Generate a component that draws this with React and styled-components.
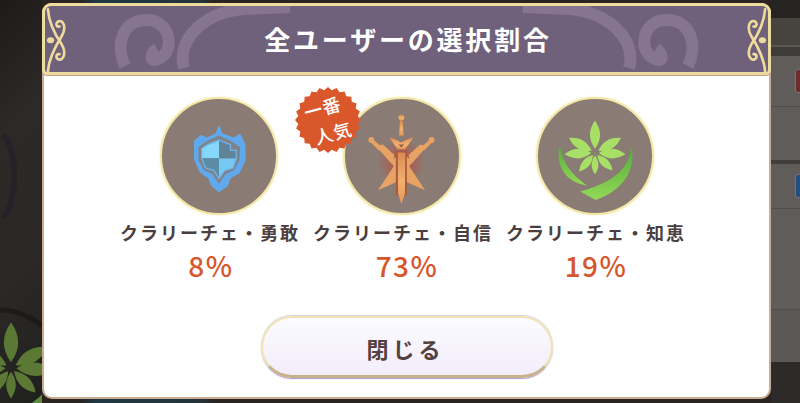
import React from 'react'
import styled, { createGlobalStyle } from 'styled-components'

const GlobalStyle = createGlobalStyle`
    html, body {
        margin: 0;
        padding: 0;
        background: #232120;
    }
    * {
        box-sizing: border-box;
    }
`

const Page = styled.div`
    width: 800px;
    height: 403px;
    overflow: hidden;
    display: grid;
    grid-template-columns: 42px 729px 29px;
    font-family: 'Noto Sans CJK JP', 'Noto Sans', sans-serif;
    background: linear-gradient(90deg, #2b2320 10%, #1e3842 12%, #24333a 25%, #2b2320 27%);
`

const LeftSide = styled.div`
    background: linear-gradient(135deg, #1d1b1a 0%, #2c2a27 30%, #2a2725 70%, #1f211e 100%);
    overflow: hidden;
`

const RightSide = styled.div`
    display: flex;
    flex-direction: column;
    overflow: hidden;
`

const Band = styled.div`
    height: ${p => p.$h}px;
    flex: none;
    background: ${p => p.$bg};
    display: flex;
    justify-content: flex-end;
    align-items: center;
`

const Tag = styled.div`
    width: 8px;
    height: 24px;
    margin-right: -3px;
    border-radius: 3px;
    border: 1px solid #77736f;
    background: ${p => p.$color};
`

const Modal = styled.div`
    margin-top: 3px;
    height: 396px;
    display: flex;
    flex-direction: column;
    background: #fff;
    border: 2px solid #c8ac93;
    border-top: 0;
    border-radius: 10px;
`

const Header = styled.header`
    position: relative;
    height: 72px;
    margin: 0 -2px;
    flex: none;
    display: flex;
    align-items: center;
    justify-content: center;
    overflow: hidden;
    background: #6f617b;
    border: 3px solid #eedc9f;
    border-radius: 9px 9px 5px 5px;
    box-shadow: 0 1px 0 #b89f8b;
`

const HeaderArt = styled.svg`
    position: absolute;
    left: -3px;
    top: -3px;
    width: 729px;
    height: 72px;
`

const Ornament = styled.svg`
    position: absolute;
    top: 0;
    ${p => (p.$flip ? 'right: -3px; transform: scaleX(-1);' : 'left: -3px;')}
    width: 28px;
    height: 66px;
`

const Title = styled.h1`
    position: relative;
    margin: 0 0 0 3px;
    color: #fff;
    font-size: 26px;
    font-weight: 700;
    letter-spacing: 2.8px;
    line-height: 1;
`

const Body = styled.div`
    flex: 1;
    display: flex;
    flex-direction: column;
    align-items: center;
    padding: 22px 7px 0 0;
`

const Choices = styled.div`
    display: grid;
    grid-template-columns: repeat(3, 193px);
`

const Choice = styled.div`
    display: flex;
    flex-direction: column;
    align-items: center;
`

const Emblem = styled.div`
    position: relative;
    width: 118px;
    height: 118px;
    margin-left: ${p => p.$shift}px;
    border-radius: 50%;
    background: #8a7b74;
    border: 2px solid #f3e7a6;
    box-shadow: 0 0 3px #f6eebc;
`

const EmblemArt = styled.svg`
    display: block;
    width: 114px;
    height: 114px;
`

const Badge = styled.div`
    position: absolute;
    left: -50px;
    top: -12px;
    width: 66px;
    height: 66px;
`

const BadgeText = styled.div`
    position: absolute;
    inset: 0;
    display: flex;
    flex-direction: column;
    align-items: center;
    justify-content: center;
    color: #fff;
    font-size: 18px;
    font-weight: 500;
    line-height: 27px;
    transform: rotate(-15deg);
`

const BadgeLine = styled.span`
    letter-spacing: 1px;
    margin-left: ${p => p.$shift}px;
`

const Name = styled.div`
    margin-top: 5px;
    color: #4b3f40;
    font-size: 18px;
    font-weight: 700;
    letter-spacing: 2px;
    line-height: 25px;
    white-space: nowrap;
`

const Percent = styled.div`
    margin-top: 3px;
    margin-left: ${p => p.$shift}px;
    color: #d7562b;
    font-size: 28px;
    font-weight: 500;
    line-height: 34px;
    letter-spacing: 1.5px;
`

const CloseButton = styled.button`
    margin: 34px 0 0 8px;
    padding: 3px 3px 0 0;
    width: 292px;
    height: 62px;
    flex: none;
    border-radius: 31px;
    border: 2px solid #efe4b4;
    border-bottom: 3px solid #c8b289;
    background: linear-gradient(#fcfbff, #f2edfb);
    box-shadow: 0 1px 1px #a99bd0, 0 -1px 1px #d5cdec;
    color: #54403f;
    font-family: inherit;
    font-size: 22px;
    font-weight: 700;
    letter-spacing: 4px;
`

const leaf = 'M0 -9 C-15 -30 -15 -50 0 -72 C15 -50 15 -30 0 -9 Z'

function Leaf({ angle, scale, fill, x = 0, y = 0 }) {
    return <path d={leaf} fill={fill} transform={`translate(${x} ${y}) rotate(${angle}) scale(${scale})`} />
}

const flowerLeaves = [
    { angle: 0, scale: 1.38 },
    { angle: 60, scale: 1.28 },
    { angle: -60, scale: 1.28 },
    { angle: 93, scale: 1.3 },
    { angle: -93, scale: 1.3 },
    { angle: 135, scale: 1.05 },
    { angle: -140, scale: 1.05 },
    { angle: 180, scale: 0.92 },
]

function ShieldIcon() {
    return (
        <EmblemArt viewBox="30 40 350 350">
            <path
                d="M205 120 L216 146 L250 158 L270 146 L286 178 L287 228 L268 268 L240 284 L232 308 L205 326 L182 308 L172 284 L146 266 L128 226 L128 168 L150 150 L168 158 L194 146 Z"
                fill="#5fa9ec"
            />
            <path
                d="M205 152 L244 170 L270 188 L268 228 L252 258 L226 270 L205 300 L184 270 L158 258 L142 228 L142 188 L166 170 Z"
                fill="#80848a"
            />
            <path d="M205 166 L205 222 L152 222 L152 192 L170 180 Z" fill="#86d8fb" />
            <path d="M205 222 L258 222 L248 252 L222 260 L205 284 Z" fill="#74c8f2" />
            <path d="M205 166 L240 180 L240 198 L258 198 L258 222 L205 222 Z" fill="#5f8496" />
            <path d="M205 222 L205 284 L190 260 L164 252 L152 222 Z" fill="#5a8ca6" />
            <path
                d="M205 166 L240 180 L240 198 L258 198 L258 222 L248 252 L222 260 L205 284 L190 260 L164 252 L152 222 L152 192 L170 180 Z"
                fill="none"
                stroke="#6cb4ee"
                strokeWidth="4"
            />
        </EmblemArt>
    )
}

function SideSword({ transform }) {
    return (
        <g transform={transform}>
            <circle cx="241" cy="166" r="9" />
            <path d="M238 172 L246 164 L274 188 L264 198 Z" />
            <path d="M256 186 L276 180 L312 212 L304 240 Z" />
            <path d="M300 232 L322 212 L350 236 L406 320 L338 290 Z" />
        </g>
    )
}

function SwordIcon() {
    return (
        <EmblemArt viewBox="160 40 350 350">
            <defs>
                <linearGradient id="swordFill" x1="0" y1="0" x2="0" y2="1">
                    <stop offset="0" stopColor="#dd8a50" />
                    <stop offset="0.55" stopColor="#f0b06e" />
                    <stop offset="1" stopColor="#e69a58" />
                </linearGradient>
                <radialGradient id="swordGlow">
                    <stop offset="0" stopColor="#c9432f" stopOpacity="0.85" />
                    <stop offset="1" stopColor="#c9432f" stopOpacity="0" />
                </radialGradient>
            </defs>
            <circle cx="333" cy="235" r="72" fill="url(#swordGlow)" />
            <g fill="#e8a263">
                <SideSword />
                <SideSword transform="translate(667 0) scale(-1 1)" />
            </g>
            <path d="M316 200 L350 200 L350 336 L316 336 Z" fill="#a85a42" />
            <g fill="url(#swordFill)">
                <circle cx="333" cy="97" r="9" />
                <path d="M329 106 L337 106 L340 152 L326 152 Z" />
                <path d="M297 158 C310 160 325 170 333 173 C341 170 356 160 370 158 C362 170 356 180 344 194 L322 194 C310 180 304 170 297 158 Z" />
                <path d="M322 204 L345 204 L344 330 L333 362 L323 330 Z" />
            </g>
            <path d="M324 176 L333 190 L342 176 L333 181 Z" fill="#8a5a48" />
        </EmblemArt>
    )
}

function LeafIcon() {
    return (
        <EmblemArt viewBox="35 40 350 350">
            <defs>
                <linearGradient id="moonFill" x1="0" y1="0" x2="0" y2="1">
                    <stop offset="0" stopColor="#4fa838" />
                    <stop offset="1" stopColor="#93d957" />
                </linearGradient>
            </defs>
            <path d="M101 177 C88 245 118 296 186 306 C150 280 112 250 101 177 Z" fill="url(#moonFill)" />
            <path d="M320 178 C322 250 268 296 164 324 L212 350 C296 320 340 258 320 178 Z" fill="url(#moonFill)" />
            {flowerLeaves.map(l => (
                <Leaf key={l.angle} {...l} x={210} y={205} fill="#a8df66" />
            ))}
            <circle cx="210" cy="205" r="4" fill="#6f9a48" />
        </EmblemArt>
    )
}

const burstPoints = Array.from({ length: 48 }, (_, i) => {
    const r = i % 2 === 0 ? 33 : 30
    const a = (i * Math.PI) / 24
    return `${(33 + r * Math.cos(a)).toFixed(1)},${(33 + r * Math.sin(a)).toFixed(1)}`
}).join(' ')

const choices = [
    { name: 'クラリーチェ・勇敢', percent: '8%', Icon: ShieldIcon, shift: 18, numShift: 2 },
    { name: 'クラリーチェ・自信', percent: '73%', Icon: SwordIcon, shift: -2, numShift: 8, top: true },
    { name: 'クラリーチェ・知恵', percent: '19%', Icon: LeafIcon, shift: -2, numShift: 0 },
]

function HeaderSwirl({ transform }) {
    return (
        <g transform={transform}>
            <path d="M125 66 C116 48 120 20 147 20 C172 20 177 56 154 60 C149 60 152 52 157 49" />
            <path d="M184 68 C176 40 204 12 244 9 L290 7" />
        </g>
    )
}

function HeaderCurl({ flip }) {
    return (
        <Ornament $flip={flip} viewBox="125 14 85 200">
            <g fill="none" stroke="#efdc9c" strokeWidth="8" strokeLinecap="round">
                <path d="M143 212 C146 170 168 132 185 105 C200 80 190 55 175 60 C165 65 168 78 178 76" />
                <path d="M143 24 C146 66 168 106 185 131 C200 156 190 181 175 176 C165 171 168 158 178 160" />
            </g>
            <ellipse cx="151" cy="118" rx="11" ry="9" fill="#efdc9c" />
        </Ornament>
    )
}

export default function App() {
    return (
        <Page>
            <GlobalStyle />
            <LeftSide>
                <svg width="42" height="403" viewBox="0 0 42 403">
                    <path d="M3 135 C18 150 18 200 3 218" fill="none" stroke="#252227" strokeWidth="6" />
                    <path d="M0 310 C16 310 30 316 42 326" fill="none" stroke="#1d1b1a" strokeWidth="5" />
                    {flowerLeaves.map(l => (
                        <Leaf key={l.angle} {...l} scale={l.scale * 0.46} x={11} y={368} fill="#5b7934" />
                    ))}
                    <path d="M32 403 C38 398 41 396 42 394 L42 403 Z" fill="#5f8a3a" />
                </svg>
            </LeftSide>
            <Modal>
                <Header>
                    <HeaderArt viewBox="42 3 729 72">
                        <g fill="none" stroke="#857492" strokeWidth="12">
                            <HeaderSwirl />
                            <HeaderSwirl transform="translate(813 0) scale(-1 1)" />
                        </g>
                    </HeaderArt>
                    <HeaderCurl />
                    <HeaderCurl flip />
                    <Title>全ユーザーの選択割合</Title>
                </Header>
                <Body>
                    <Choices>
                        {choices.map(({ name, percent, Icon, shift, numShift, top }) => (
                            <Choice key={name}>
                                <Emblem $shift={shift}>
                                    <Icon />
                                    {top && (
                                        <Badge>
                                            <svg width="66" height="66" viewBox="0 0 66 66">
                                                <polygon points={burstPoints} fill="#d9572b" />
                                            </svg>
                                            <BadgeText>
                                                <BadgeLine $shift={-4}>一番</BadgeLine>
                                                <BadgeLine $shift={4}>人気</BadgeLine>
                                            </BadgeText>
                                        </Badge>
                                    )}
                                </Emblem>
                                <Name>{name}</Name>
                                <Percent $shift={numShift}>{percent}</Percent>
                            </Choice>
                        ))}
                    </Choices>
                    <CloseButton>閉じる</CloseButton>
                </Body>
            </Modal>
            <RightSide>
                <Band $h={18} $bg="#262422" />
                <Band $h={27} $bg="#47443f" />
                <Band $h={2} $bg="#5c5954" />
                <Band $h={9} $bg="#3e3c39" />
                <Band $h={50} $bg="#5f5c59"><Tag $color="#6e2a2c" /></Band>
                <Band $h={1} $bg="#4f4c4a" />
                <Band $h={53} $bg="#5f5c59" />
                <Band $h={4} $bg="#403e3c" />
                <Band $h={44} $bg="#5f5c59"><Tag $color="#224f80" /></Band>
                <Band $h={1} $bg="#4f4c4a" />
                <Band $h={100} $bg="#5f5c59" />
                <Band $h={1} $bg="#4f4c4a" />
                <Band $h={52} $bg="#5b5855" />
                <Band $h={41} $bg="#2c2b2a" />
            </RightSide>
        </Page>
    )
}
